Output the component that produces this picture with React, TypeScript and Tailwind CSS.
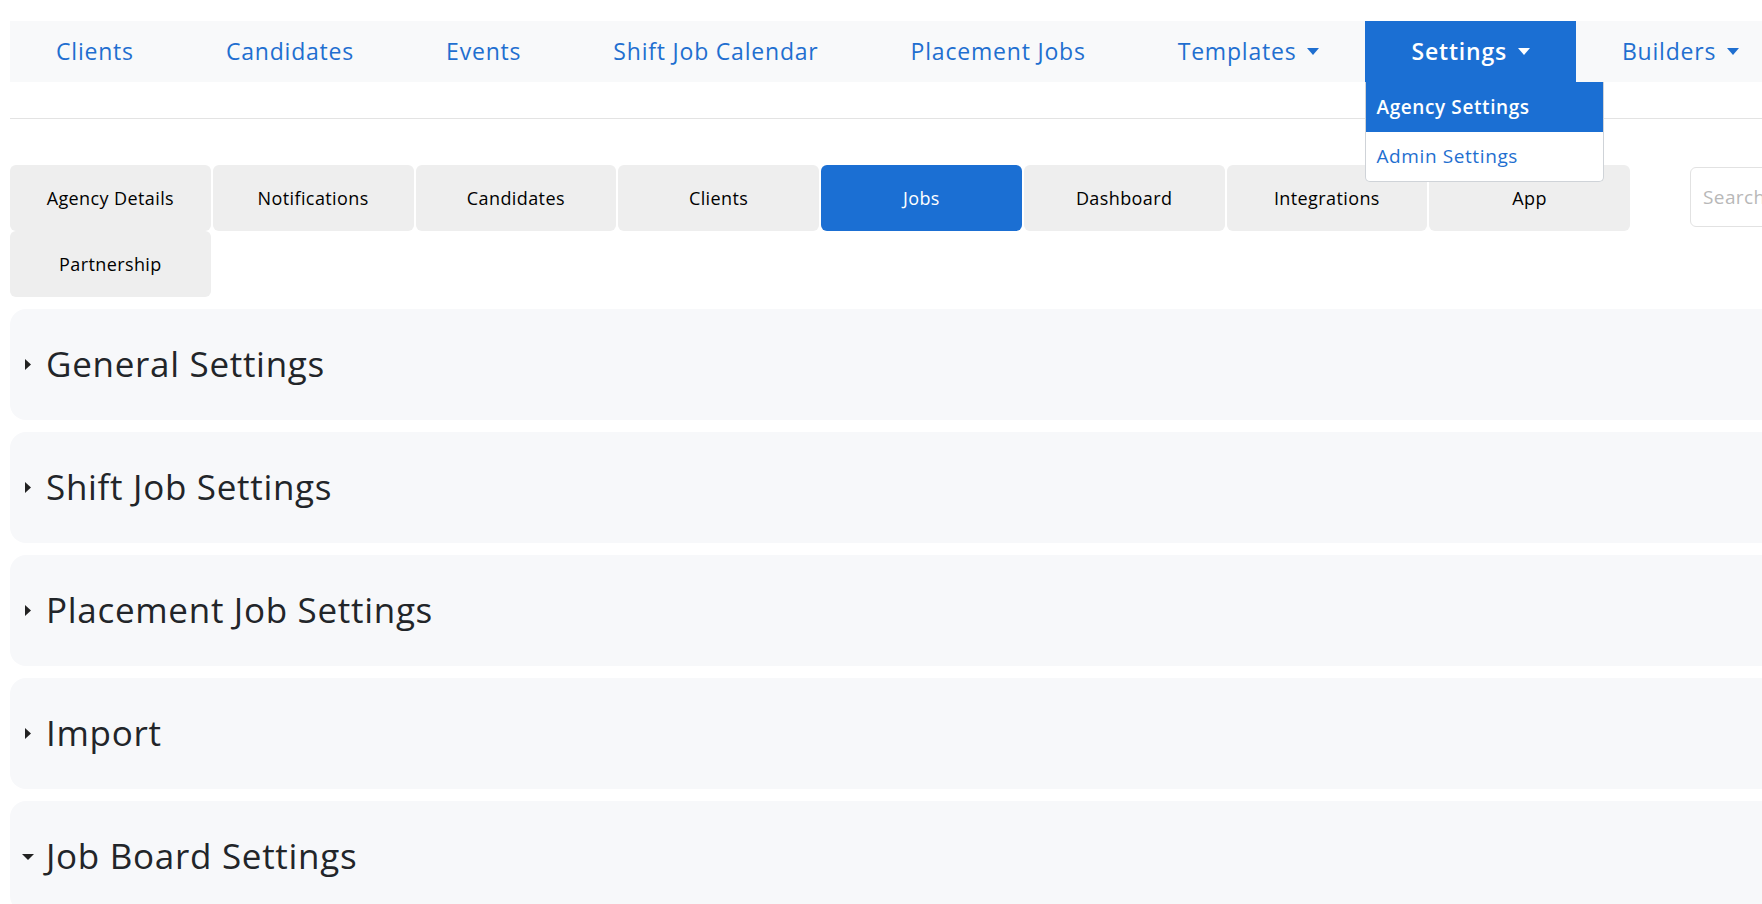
import React from 'react';

const font = { fontFamily: '"Open Sans", "Noto Sans", Arial, sans-serif' };

function Caret({ className = '' }: { className?: string }) {
  return (
    <svg width="12" height="7" viewBox="0 0 12 7" className={className}>
      <path d="M0 0h12L6 7z" fill="currentColor" />
    </svg>
  );
}

function RightCaret() {
  return (
    <svg width="6" height="11" viewBox="0 0 6 11" className="text-[#222]">
      <path d="M0 0l6 5.5L0 11z" fill="currentColor" />
    </svg>
  );
}

function DownCaret() {
  return (
    <svg width="12" height="6" viewBox="0 0 12 6" className="text-[#222]">
      <path d="M0 0h12L6 6z" fill="currentColor" />
    </svg>
  );
}

const navItems = [
  { label: 'Clients' },
  { label: 'Candidates' },
  { label: 'Events' },
  { label: 'Shift Job Calendar' },
  { label: 'Placement Jobs' },
  { label: 'Templates', caret: true },
  { label: 'Settings', caret: true, active: true },
  { label: 'Builders', caret: true },
];

const tabs = ['Agency Details', 'Notifications', 'Candidates', 'Clients', 'Jobs', 'Dashboard', 'Integrations', 'App', 'Partnership'];

const sections = [
  { title: 'General Settings' },
  { title: 'Shift Job Settings' },
  { title: 'Placement Job Settings' },
  { title: 'Import' },
  { title: 'Job Board Settings', open: true },
];

export default function App() {
  return (
    <div className="h-[904px] w-full overflow-hidden bg-white" style={font}>
      <div className="w-[2000px] pl-[10px] pt-[21px]">
        {/* Navbar */}
        <nav className="flex h-[61px] items-stretch bg-[#f8f9fa]">
          {navItems.map((item) => (
            <div
              key={item.label}
              className={`relative flex items-center gap-[11px] px-[46px] text-[23px] tracking-[0.8px] ${
                item.active ? 'bg-[#1b6fd3] font-semibold text-white' : 'text-[#1f6fd0]'
              }`}
            >
              <span>{item.label}</span>
              {item.caret && <Caret />}
              {item.active && (
                <div className="absolute left-0 top-full z-10 w-[239px] overflow-hidden rounded-b-[5px] border border-t-0 border-[#cfd3d8] bg-white font-normal tracking-[0.6px]">
                  <div className="flex h-[50px] items-center bg-[#1b6fd3] px-[10px] text-[19px] font-semibold text-white">
                    Agency Settings
                  </div>
                  <div className="flex h-[49px] items-center px-[10px] text-[19px] text-[#1f6fd0]">
                    Admin Settings
                  </div>
                </div>
              )}
            </div>
          ))}
        </nav>

        <div className="mt-[36px] border-t border-[#e3e3e3]" />

        {/* Tabs */}
        <div className="mt-[46px] flex items-start">
          <div className="grid w-[1620px] grid-cols-8 gap-x-[2px]">
            {tabs.map((t) => (
              <div
                key={t}
                className={`flex h-[66px] items-center justify-center rounded-[6px] text-[18px] font-medium tracking-[0.4px] ${
                  t === 'Jobs' ? 'bg-[#1b6fd3] text-white' : 'bg-[#eeeeee] text-black'
                }`}
              >
                {t}
              </div>
            ))}
          </div>
          <div className="ml-[60px] mt-[2px] flex h-[60px] w-[220px] items-center rounded-[6px] border border-[#e2e2e2] px-[12px] text-[19px] tracking-[0.4px] text-[#b8b8b8]">
            Search
          </div>
        </div>

        {/* Accordion sections */}
        <div className="mt-[12px] flex flex-col gap-[12px]">
          {sections.map((s) => (
            <div key={s.title} className="flex h-[111px] items-center gap-[12px] rounded-[16px] bg-[#f7f8fa] pl-[12px]">
              <div className="flex w-[12px] justify-center">{s.open ? <DownCaret /> : <RightCaret />}</div>
              <span className="text-[35px] tracking-[0.7px] text-[#222529]">{s.title}</span>
            </div>
          ))}
        </div>
      </div>
    </div>
  );
}
